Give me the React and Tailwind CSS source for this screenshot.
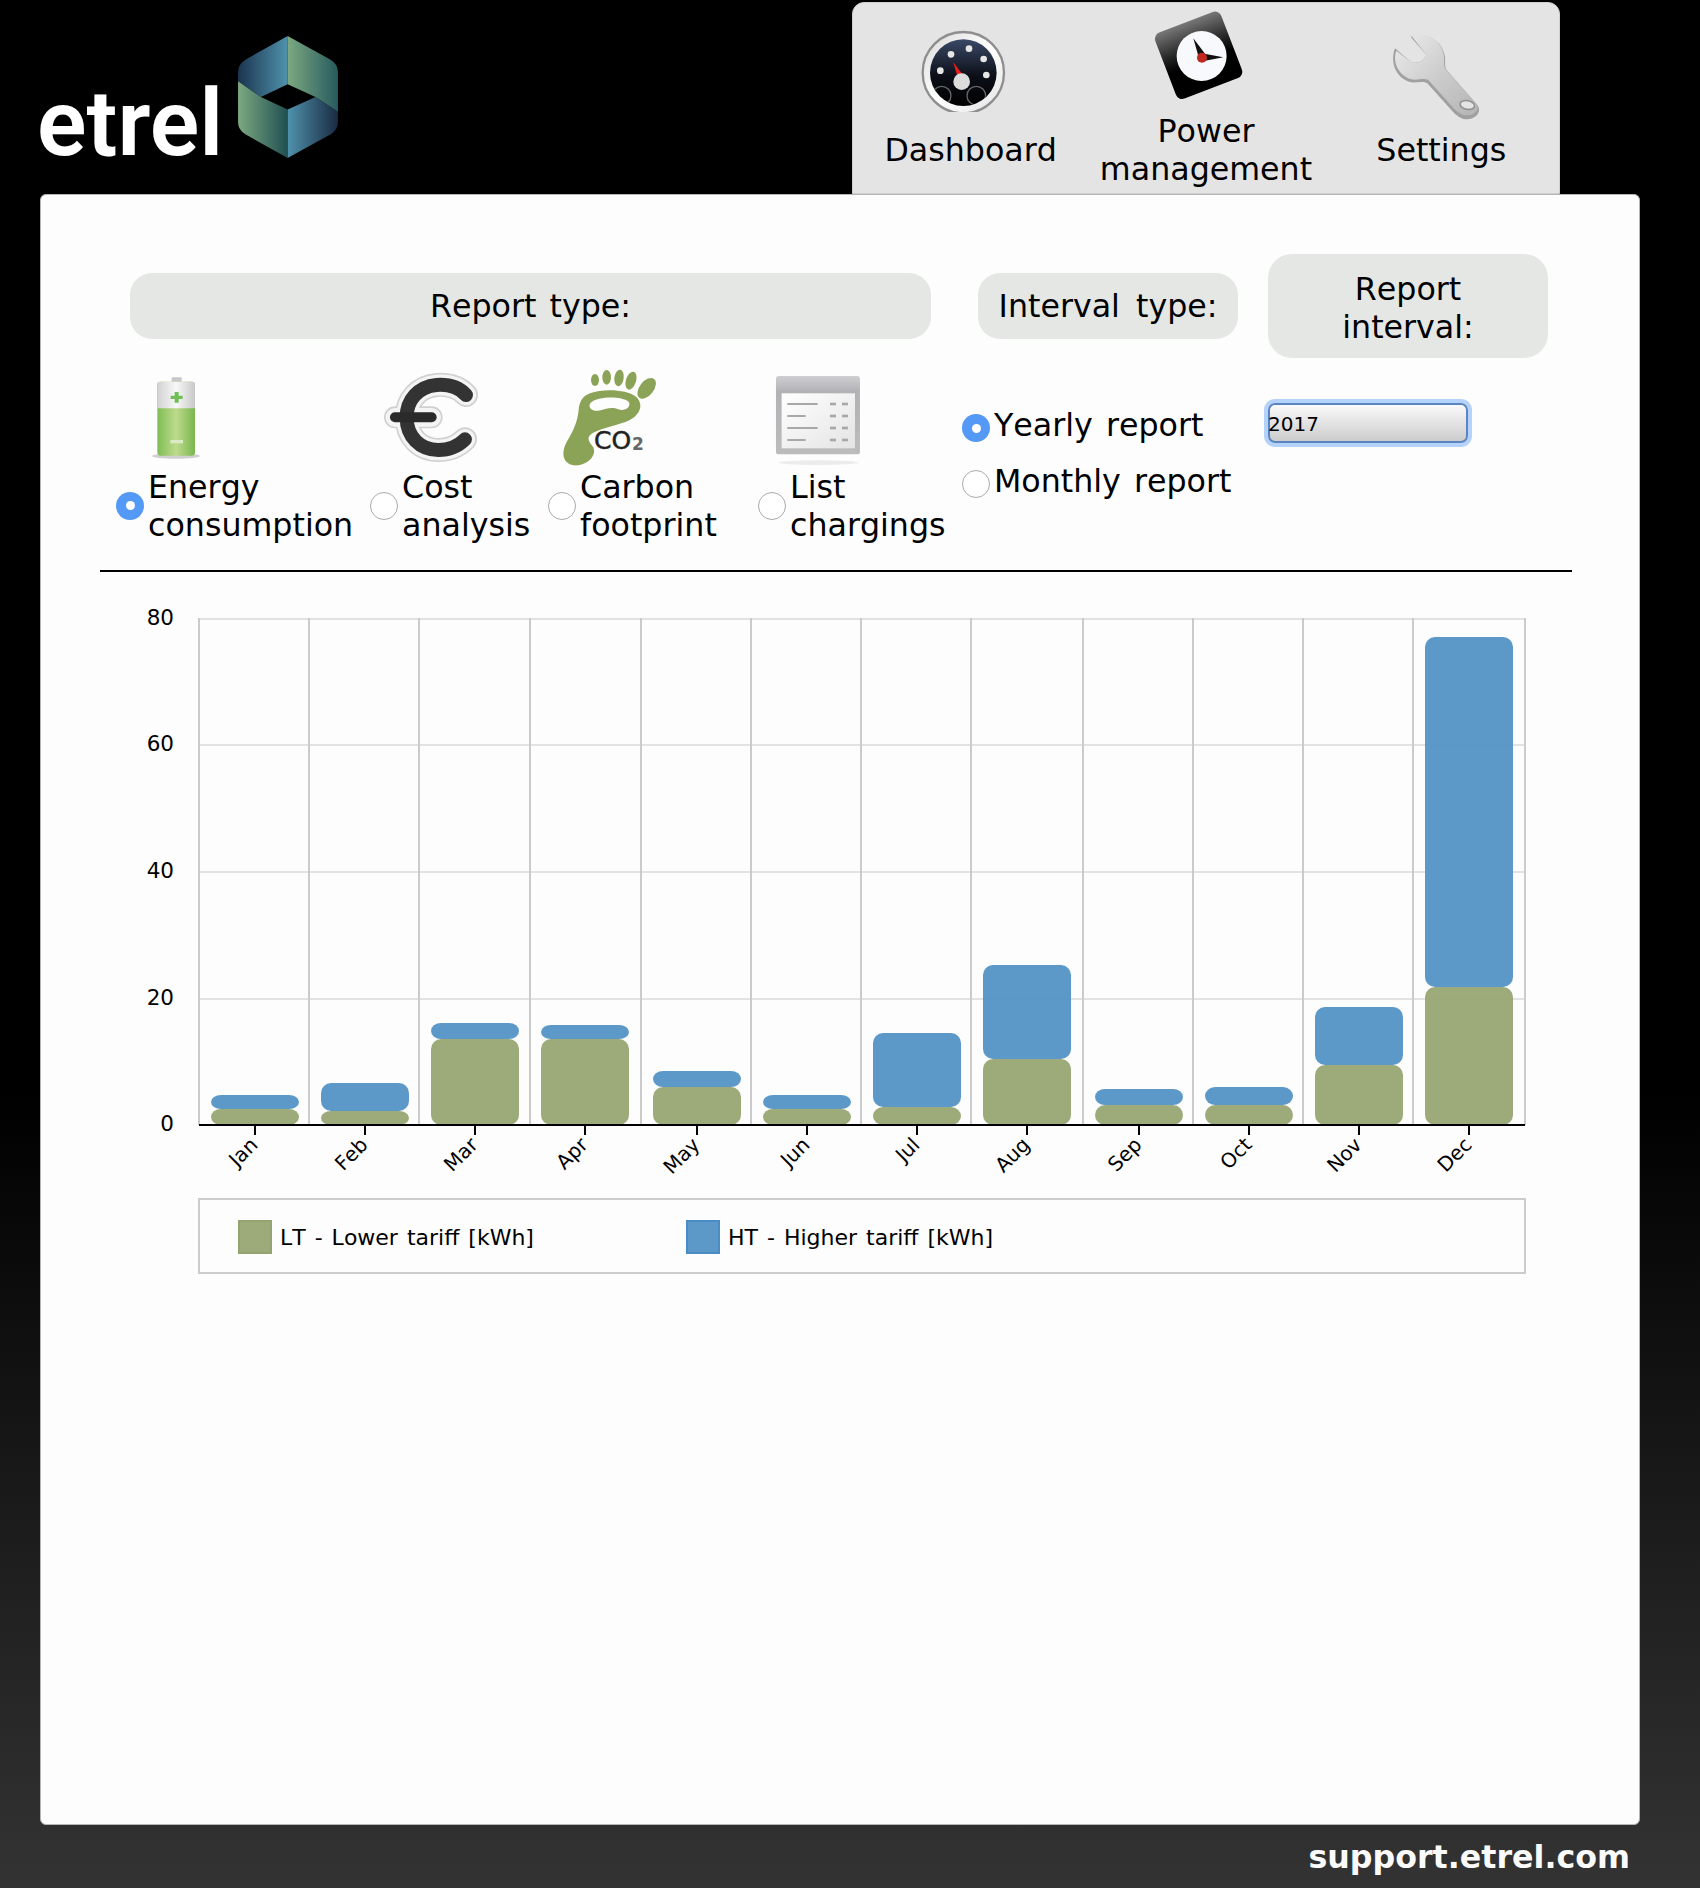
import React from 'react';

const Z = 'scale(0.3333)';

const bars = [
  { m: 'Jan', x: 211, top: 1095, split: 1109 },
  { m: 'Feb', x: 321, top: 1083, split: 1111 },
  { m: 'Mar', x: 431, top: 1023, split: 1039 },
  { m: 'Apr', x: 541, top: 1025, split: 1039 },
  { m: 'May', x: 653, top: 1071, split: 1087 },
  { m: 'Jun', x: 763, top: 1095, split: 1109 },
  { m: 'Jul', x: 873, top: 1033, split: 1107 },
  { m: 'Aug', x: 983, top: 965, split: 1059 },
  { m: 'Sep', x: 1095, top: 1089, split: 1105 },
  { m: 'Oct', x: 1205, top: 1087, split: 1105 },
  { m: 'Nov', x: 1315, top: 1007, split: 1065 },
  { m: 'Dec', x: 1425, top: 637, split: 987 },
];
const gridX = [199, 309, 419, 530, 641, 751, 861, 971, 1083, 1193, 1303, 1413, 1525];
const gridY = [
  { v: 80, y: 619 },
  { v: 60, y: 745 },
  { v: 40, y: 872 },
  { v: 20, y: 999 },
  { v: 0, y: 1125 },
];

function GaugeIcon() {
  return (
    <svg viewBox="0 0 100 109" className="w-[100px] h-[109px] mr-[14px]">
      <defs>
        <linearGradient id="dial" x1="0" y1="0" x2="0" y2="1">
          <stop offset="0" stopColor="#3a4966" />
          <stop offset="0.55" stopColor="#0c0f18" />
          <stop offset="1" stopColor="#000" />
        </linearGradient>
        <linearGradient id="dialRing" x1="0" y1="0" x2="1" y2="1">
          <stop offset="0" stopColor="#d8d8d8" />
          <stop offset="0.5" stopColor="#ffffff" />
          <stop offset="1" stopColor="#e2e2e2" />
        </linearGradient>
        <clipPath id="dialClip"><circle cx="187" cy="218" r="99" /></clipPath>
      </defs>
      <g transform={`translate(-13 -3) ${Z}`}>
        <circle cx="187" cy="218" r="122" fill="url(#dialRing)" stroke="#8e8e8e" strokeWidth="7" />
        <circle cx="187" cy="218" r="100" fill="url(#dial)" />
        <g fill="#e6e6e6">
          <circle cx="150" cy="163" r="10" />
          <circle cx="204" cy="146" r="10" />
          <circle cx="248" cy="177" r="10" />
          <circle cx="256" cy="225" r="10" />
          <circle cx="118" cy="212" r="10" />
        </g>
        <g clipPath="url(#dialClip)" fill="none" stroke="#666" strokeWidth="4">
          <circle cx="122" cy="287" r="28" />
          <circle cx="226" cy="287" r="28" />
        </g>
        <path d="M156 185 L186 225 L170 232 Z" fill="#e0201c" />
        <circle cx="182" cy="245" r="25" fill="#dcdcdc" />
      </g>
    </svg>
  );
}

function ClockIcon() {
  return (
    <svg viewBox="0 0 100 109" className="w-[100px] h-[109px] mr-[14px]">
      <defs>
        <linearGradient id="clockBody" x1="0" y1="0" x2="0" y2="1">
          <stop offset="0" stopColor="#777" />
          <stop offset="0.4" stopColor="#222" />
          <stop offset="0.6" stopColor="#000" />
        </linearGradient>
      </defs>
      <g transform={`translate(-249 -3) ${Z}`}>
        <rect x="790" y="60" width="212" height="212" rx="20" fill="url(#clockBody)" transform="rotate(-21 896 166)" />
        <circle cx="905" cy="168" r="75" fill="#f7f9fc" />
        <path d="M880 115 L918 165 L898 178 Z" fill="#111" />
        <path d="M905 160 L970 172 L908 184 Z" fill="#111" />
        <circle cx="906" cy="173" r="15" fill="#c0281f" />
      </g>
    </svg>
  );
}

function WrenchIcon() {
  return (
    <svg viewBox="0 0 100 109" className="w-[100px] h-[109px] mr-[14px] overflow-visible">
      <defs>
        <linearGradient id="wrench" x1="0" y1="0" x2="1" y2="1">
          <stop offset="0" stopColor="#ececec" />
          <stop offset="0.5" stopColor="#cdcdcd" />
          <stop offset="1" stopColor="#b4b4b4" />
        </linearGradient>
      </defs>
      <g transform={`translate(-25 17) ${Z}`}>
        <path
          d="M155 50 C200 35 250 60 258 110 C260 130 255 140 265 152 L355 255 C372 278 345 300 318 298 C300 295 285 280 275 268 L205 190 C190 180 170 192 150 185 C112 172 92 130 108 85 L155 125 C172 133 195 125 202 105 Z"
          fill="#a0a0a0"
        />
        <path
          d="M158 48 C200 35 248 60 255 108 C257 128 252 138 262 150 L352 252 C365 270 345 288 320 286 C304 283 290 272 280 260 L208 180 C192 172 172 184 152 176 C118 164 100 125 112 92 L155 125 C172 133 195 125 202 105 Z"
          fill="url(#wrench)"
        />
        <ellipse cx="325" cy="255" rx="22" ry="13" fill="#e4e4e4" stroke="#929292" strokeWidth="5" transform="rotate(10 325 255)" />
      </g>
    </svg>
  );
}

function BatteryIcon() {
  return (
    <svg viewBox="0 0 50 109" className="w-[50px] h-[109px] ml-[34px]">
      <defs>
        <linearGradient id="batGreen" x1="0" y1="0" x2="1" y2="0">
          <stop offset="0" stopColor="#7fbd55" />
          <stop offset="0.5" stopColor="#bddb8c" />
          <stop offset="1" stopColor="#78b64e" />
        </linearGradient>
        <linearGradient id="batSilver" x1="0" y1="0" x2="1" y2="0">
          <stop offset="0" stopColor="#d2d2d2" />
          <stop offset="0.5" stopColor="#f8f8f8" />
          <stop offset="1" stopColor="#c8c8c8" />
        </linearGradient>
      </defs>
      <g transform={`translate(-20 2) ${Z}`}>
        <ellipse cx="138" cy="288" rx="72" ry="8" fill="#cfcfcf" />
        <rect x="125" y="52" width="30" height="16" rx="3" fill="#c8c8c8" />
        <rect x="82" y="65" width="113" height="222" rx="10" fill="url(#batGreen)" />
        <path d="M82 145 V75 Q82 65 92 65 H185 Q195 65 195 75 V145 Z" fill="url(#batSilver)" />
        <path d="M134 96 h12 v11 h12 v10 h-12 v11 h-12 v-11 h-12 v-10 h12 Z" fill="#6fbe57" />
        <rect x="121" y="240" width="38" height="10" fill="#dbe9c4" />
      </g>
    </svg>
  );
}

function EuroIcon() {
  const arc = 'M1008 105 C985 80 950 73 920 75 C865 80 830 120 830 172 C830 230 870 270 925 270 C955 270 985 258 1005 238';
  const bar = 'M795 172 H905';
  return (
    <svg viewBox="0 0 100 109" className="w-[100px] h-[109px] ml-[10px]">
      <g transform={`translate(-250 2) ${Z}`} fill="none" strokeLinecap="round">
        <path d={arc} stroke="#d0d0d0" strokeWidth="72" />
        <path d={bar} stroke="#d0d0d0" strokeWidth="66" />
        <path d={arc} stroke="#f4f4f4" strokeWidth="62" />
        <path d={bar} stroke="#f4f4f4" strokeWidth="56" />
        <path d={arc} stroke="#333333" strokeWidth="42" />
        <path d={bar} stroke="#2a2a2a" strokeWidth="30" />
      </g>
    </svg>
  );
}

function FootIcon() {
  return (
    <svg viewBox="0 0 105 109" className="w-[105px] h-[109px] ml-[7px]">
      <g transform={`translate(-5 2) ${Z}`} fill="#8ba356">
        <ellipse cx="135" cy="60" rx="12" ry="18" />
        <ellipse cx="170" cy="52" rx="13" ry="22" />
        <ellipse cx="207" cy="54" rx="14" ry="25" transform="rotate(8 207 54)" />
        <ellipse cx="243" cy="62" rx="15" ry="28" transform="rotate(18 243 62)" />
        <ellipse cx="290" cy="85" rx="21" ry="36" transform="rotate(38 290 85)" />
        <path d="M120 100 C160 85 230 88 258 110 C285 135 268 170 228 185 C190 198 155 205 130 218 C105 232 118 245 130 262 C142 292 105 320 70 316 C38 310 34 280 48 250 C68 215 82 190 86 150 C88 125 98 108 120 100 Z" />
        <path d="M122 128 C145 108 215 108 236 125 C245 140 225 155 205 148 C185 138 165 148 145 152 C125 155 112 140 122 128 Z" fill="#fdfdfd" />
      </g>
      <text x="39" y="91" fontSize="25" fill="#222" stroke="#222" strokeWidth="0.5" className="font-['DejaVu_Sans']">CO</text>
      <text x="77" y="92" fontSize="17" fontWeight="700" fill="#666" className="font-['DejaVu_Sans']">2</text>
    </svg>
  );
}

function ListIcon() {
  const rows = [
    { y: 132, end: 803 },
    { y: 168, end: 767 },
    { y: 204, end: 803 },
    { y: 240, end: 767 },
  ];
  return (
    <svg viewBox="0 0 100 109" className="w-[100px] h-[109px] ml-[12px]">
      <defs>
        <linearGradient id="listBody" x1="0" y1="0" x2="0" y2="1">
          <stop offset="0" stopColor="#cfcfd2" />
          <stop offset="0.2" stopColor="#b2b2b6" />
          <stop offset="1" stopColor="#bcbcbc" />
        </linearGradient>
        <linearGradient id="listPanel" x1="0" y1="0" x2="1" y2="1">
          <stop offset="0" stopColor="#ffffff" />
          <stop offset="1" stopColor="#e4e4e4" />
        </linearGradient>
      </defs>
      <g transform={`translate(-220 2) ${Z}`}>
        <ellipse cx="805" cy="308" rx="120" ry="7" fill="#ececec" />
        <rect x="678" y="48" width="252" height="235" rx="8" fill="url(#listBody)" />
        <rect x="695" y="100" width="220" height="165" fill="url(#listPanel)" />
        {rows.map((r) => (
          <g key={r.y} fill="#a8a8a8">
            <rect x="712" y={r.y - 3} width={r.end - 712} height="6" />
            <rect x="840" y={r.y - 4} width="18" height="8" />
            <rect x="876" y={r.y - 4} width="18" height="8" />
          </g>
        ))}
      </g>
    </svg>
  );
}

function HexLogo() {
  return (
    <svg viewBox="717 108 298 364" className="w-[100px] h-[122px] ml-[20px] mb-[6px]">
      <defs>
        <linearGradient id="hexA" x1="0" y1="0" x2="1" y2="0">
          <stop offset="0" stopColor="#1b3450" />
          <stop offset="1" stopColor="#4f92ac" />
        </linearGradient>
        <linearGradient id="hexB" x1="0" y1="0" x2="1" y2="0">
          <stop offset="0" stopColor="#7ca981" />
          <stop offset="1" stopColor="#265a5e" />
        </linearGradient>
        <linearGradient id="hexC" x1="0" y1="0" x2="1" y2="0">
          <stop offset="0" stopColor="#7ca981" />
          <stop offset="1" stopColor="#204f52" />
        </linearGradient>
        <linearGradient id="hexD" x1="0" y1="0" x2="1" y2="0">
          <stop offset="0" stopColor="#4f92ac" />
          <stop offset="1" stopColor="#1a2a42" />
        </linearGradient>
      </defs>
      <path d="M865 108 L740 178 Q717 192 717 215 V243 L785 290 L865 252 Z" fill="url(#hexA)" />
      <path d="M865 108 L992 178 Q1015 192 1015 215 V335 L948 290 L865 252 Z" fill="url(#hexB)" />
      <path d="M717 243 V365 Q717 388 740 402 L865 472 V327 L785 290 Z" fill="url(#hexC)" />
      <path d="M865 472 L992 402 Q1015 388 1015 365 V335 L948 290 L865 327 Z" fill="url(#hexD)" />
    </svg>
  );
}

function Radio({ checked, className = '' }) {
  return (
    <span
      className={`shrink-0 w-[28px] h-[28px] rounded-full flex items-center justify-center mr-[4px] ${
        checked ? 'bg-[#5599f6]' : 'bg-white border border-[#aaaaaa]'
      } ${className}`}
    >
      {checked && <span className="w-[9px] h-[9px] rounded-full bg-white" />}
    </span>
  );
}

function ReportOption({ icon, lines, checked, width }) {
  return (
    <div style={{ width }} className="shrink-0">
      <div className="h-[109px]">{icon}</div>
      <div className="flex items-center">
        <Radio checked={checked} />
        <div className="mt-[1px]">
          {lines.map((l) => (
            <div key={l}>{l}</div>
          ))}
        </div>
      </div>
    </div>
  );
}

function NavItem({ icon, lines }) {
  return (
    <div className="flex flex-col items-center">
      {icon}
      <div className="h-[76px] flex flex-col justify-center text-center">
        {lines.map((l) => (
          <div key={l}>{l}</div>
        ))}
      </div>
    </div>
  );
}

function Chart() {
  return (
    <svg viewBox="130 590 1420 700" className="w-[1420px] h-[700px] ml-[89px] font-['DejaVu_Sans'] [word-spacing:0px]">
      {gridY.slice(0, 4).map((g) => (
        <line key={g.v} x1="199" x2="1525" y1={g.y} y2={g.y} stroke="#e2e2e2" strokeWidth="2" />
      ))}
      {gridX.map((x) => (
        <line key={x} x1={x} x2={x} y1="618" y2="1125" stroke="#cbcbcb" strokeWidth="2" />
      ))}
      {bars.map((b) => (
        <g key={b.m} fillOpacity="0.95">
          <rect x={b.x} y={b.top} width="88" height={b.split - b.top} rx="10" fill="#5494c5" />
          <rect x={b.x} y={b.split} width="88" height={1125 - b.split} rx="10" fill="#98a774" />
        </g>
      ))}
      <line x1="199" x2="1525" y1="1125" y2="1125" stroke="#000" strokeWidth="2" />
      {bars.map((b) => (
        <g key={b.m}>
          <line x1={b.x + 44} x2={b.x + 44} y1="1125" y2="1135" stroke="#000" strokeWidth="2" />
          <text
            x={b.x + 48}
            y="1146"
            fontSize="20"
            textAnchor="end"
            transform={`rotate(-45 ${b.x + 48} 1146)`}
            fill="#000"
          >
            {b.m}
          </text>
        </g>
      ))}
      {gridY.map((g) => (
        <text key={g.v} x="174" y={g.y + 6} fontSize="21.5" textAnchor="end" fill="#000">
          {g.v}
        </text>
      ))}
      <rect x="199" y="1199" width="1326" height="74" fill="none" stroke="#cccccc" strokeWidth="2" />
      <rect x="239" y="1221" width="32" height="32" fill="#9dab7b" stroke="#93a470" strokeWidth="2" />
      <text x="280" y="1245" fontSize="22" fill="#000" className="[word-spacing:2px]">LT - Lower tariff [kWh]</text>
      <rect x="687" y="1221" width="32" height="32" fill="#5c99c8" stroke="#4a8cc4" strokeWidth="2" />
      <text x="728" y="1245" fontSize="22" fill="#000" className="[word-spacing:2px]">HT - Higher tariff [kWh]</text>
    </svg>
  );
}

export default function App() {
  return (
    <div className="w-[1700px] h-[1888px] flex flex-col overflow-hidden bg-[linear-gradient(#000000_0%,#000000_58%,#333333_100%)] font-['DejaVu_Sans',sans-serif] text-[31.7px] leading-[38px] text-black [font-kerning:none] [word-spacing:3px]">
      <header className="h-[194px] shrink-0 flex">
        <div className="w-[852px] shrink-0 pl-[37px] pb-[30px] flex items-end">
          <span className="w-[181px] font-['Roboto'] font-semibold text-[92px] leading-[80px] text-white [font-kerning:normal]">etrel</span>
          <HexLogo />
        </div>
        <nav className="w-[708px] h-[192px] mt-[2px] grid grid-cols-3 rounded-t-[12px] bg-[#e4e4e4] border border-[#cfcfcf]">
          <NavItem icon={<GaugeIcon />} lines={['Dashboard']} />
          <NavItem icon={<ClockIcon />} lines={['Power', 'management']} />
          <NavItem icon={<WrenchIcon />} lines={['Settings']} />
        </nav>
      </header>

      <main className="w-[1600px] h-[1631px] ml-[40px] shrink-0 rounded-[6px] bg-[#fdfdfd] border border-[#b5b5b5]">
        <div className="h-[104px] mt-[59px] pl-[89px] flex items-center">
          <div className="w-[801px] h-[66px] rounded-[22px] bg-[#e5e7e5] flex items-center justify-center">Report type:</div>
          <div className="w-[260px] h-[66px] ml-[47px] rounded-[22px] bg-[#e5e7e5] flex items-center justify-center [word-spacing:6px]">Interval type:</div>
          <div className="w-[280px] h-[104px] pt-[3px] ml-[30px] rounded-[24px] bg-[#e5e7e5] flex items-center justify-center text-center">
            Report<br />interval:
          </div>
        </div>

        <div className="flex pl-[75px]">
          <ReportOption width={254} icon={<BatteryIcon />} lines={['Energy', 'consumption']} checked />
          <ReportOption width={178} icon={<EuroIcon />} lines={['Cost', 'analysis']} />
          <ReportOption width={210} icon={<FootIcon />} lines={['Carbon', 'footprint']} />
          <ReportOption width={204} icon={<ListIcon />} lines={['List', 'chargings']} />
          <div className="w-[302px] shrink-0 pt-[48px] flex flex-col gap-[18px]">
            <div className="flex items-center">
              <Radio checked className="mt-[6px]" />
              Yearly report
            </div>
            <div className="flex items-center">
              <Radio className="mt-[6px]" />
              Monthly report
            </div>
          </div>
          <div className="mt-[45px] ml-[4px] w-[200px] h-[40px] rounded-[7px] border-2 border-[#5a85c0] ring-[4px] ring-[#b5d2fb] bg-[linear-gradient(#fafafa,#cccccc)] text-[20px] leading-[38px]">
            <span className="ml-[-2px]">2017</span>
          </div>
        </div>

        <div className="h-[2px] w-[1472px] ml-[59px] mt-[26px] bg-black" />
        <div className="mt-[18px]">
          <Chart />
        </div>
      </main>

      <footer className="flex-1 pr-[70px] pt-[13px] text-right font-bold text-[31.7px] leading-[38px] text-[#fafafa]">
        support.etrel.com
      </footer>
    </div>
  );
}
